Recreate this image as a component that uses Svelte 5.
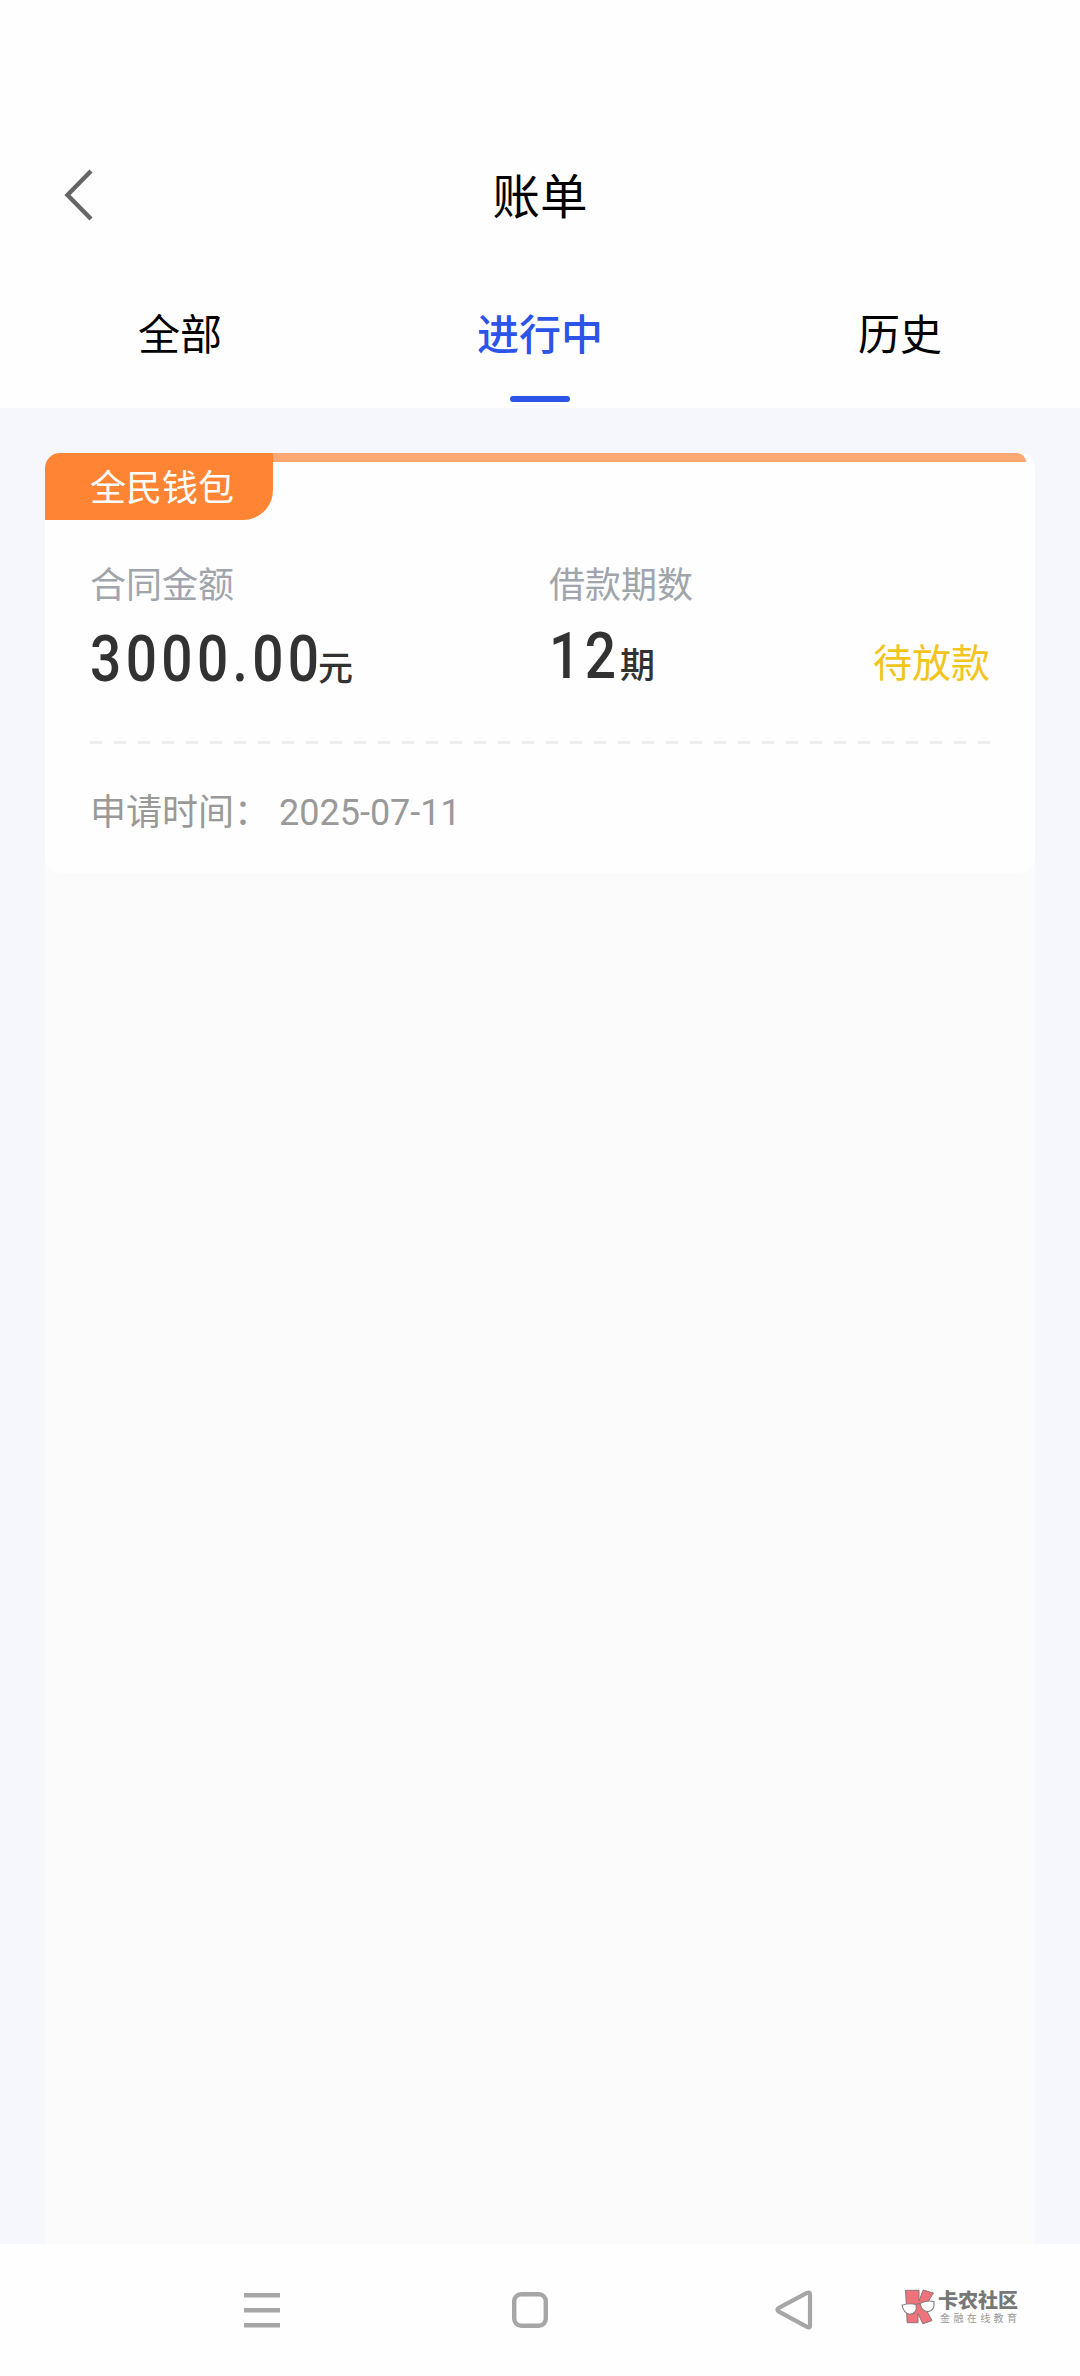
<script lang="ts">
  let active = $state('ongoing');

  const tabs = [
    { id: 'all', label: '全部' },
    { id: 'ongoing', label: '进行中' },
    { id: 'history', label: '历史' }
  ];

  const bills = [
    { product: '全民钱包', amount: '3000.00', periods: '12', status: '待放款', date: '2025-07-11' }
  ];
</script>

<div class="page">
  <header class="header">
    <button class="back" aria-label="返回">
      <svg width="30" height="54" viewBox="0 0 30 54">
        <path d="M28 3 L4.5 27 L28 51" fill="none" stroke="#666" stroke-width="4.4" />
      </svg>
    </button>
    <h1>账单</h1>
  </header>

  <nav class="tabs">
    {#each tabs as tab}
      <button class="tab" class:active={active === tab.id} onclick={() => (active = tab.id)}>
        <span>{tab.label}</span>
        <i></i>
      </button>
    {/each}
  </nav>

  <main class="content">
    <div class="list">
      {#each bills as bill}
        <section class="card">
          <div class="card-top">
            <div class="tag">{bill.product}</div>
            <div class="bar"></div>
          </div>
          <div class="info">
            <div class="amount">
              <div class="label">合同金额</div>
              <div class="value">
                <span class="digits">{bill.amount}</span><span class="unit">元</span>
              </div>
            </div>
            <div class="periods">
              <div class="label">借款期数</div>
              <div class="value">
                <span class="digits">{bill.periods}</span><span class="unit">期</span>
              </div>
            </div>
            <div class="status">{bill.status}</div>
          </div>
          <div class="divider"></div>
          <div class="apply">
            <span class="apply-label">申请时间：</span>
            <span>{bill.date}</span>
          </div>
        </section>
      {/each}
    </div>
  </main>

  <footer class="sysbar">
    <svg class="recent" width="36" height="36" viewBox="0 0 36 36">
      <path d="M0 3.3H36M0 18.3H36M0 33.3H36" stroke="#a6a6a6" stroke-width="4.6" />
    </svg>
    <svg class="home" width="36" height="36" viewBox="0 0 36 36">
      <rect x="2.2" y="2.2" width="31.6" height="31.6" rx="7" fill="none" stroke="#a6a6a6" stroke-width="4.4" />
    </svg>
    <svg class="prev" width="38" height="40" viewBox="0 0 38 40">
      <path
        d="M3.4 18.1 L32 2.9 Q35 1.6 35 4.6 V35.4 Q35 38.4 32 36.9 L3.4 21.4 Q1.5 19.8 3.4 18.1Z"
        fill="none"
        stroke="#a6a6a6"
        stroke-width="4.2"
        stroke-linejoin="round"
      />
    </svg>
    <div class="brand">
      <svg width="35" height="36" viewBox="0 0 35 36">
        <g fill="#f0727b" stroke="#8a7377" stroke-width="1">
          <path d="M4.6 1.3 H18 V12 L22.2 1 L32.5 4 L23.6 18 L31 31.6 L21.8 34.8 L17 24.5 V33.7 H6.2 Z" />
        </g>
        <g fill="#fff" stroke="#85797c" stroke-width="1.1">
          <path d="M1 16.2 Q8 13.7 15.2 15.4 Q16.4 25 8.7 25.2 Q3 25 1 16.2Z" />
          <path d="M19 14.4 Q26 10.8 33 12.6 Q34 21.8 27 22.6 Q20.6 22.6 19 14.4Z" />
          <path d="M15.2 16 Q17 13.8 19 14.8" fill="none" />
        </g>
      </svg>
      <div class="brand-text">
        <strong>卡农社区</strong>
        <small>金融在线教育</small>
      </div>
    </div>
  </footer>
</div>

<style>
  :global(body) {
    background: #fff;
  }

  .page {
    display: flex;
    flex-direction: column;
    width: 1080px;
    height: 2376px;
    overflow: hidden;
    background: #fefefe;
    font-family: Roboto, 'Noto Sans CJK SC', sans-serif;
    color: #000;
  }

  button {
    border: 0;
    padding: 0;
    background: none;
    font: inherit;
    color: inherit;
  }

  .header {
    display: grid;
    grid-template-columns: 1fr auto 1fr;
    align-items: center;
    height: 132px;
    padding: 129px 63px 0;
  }

  .back {
    display: flex;
    width: 30px;
  }

  h1 {
    margin: 0;
    padding-top: 5px;
    font-size: 47.5px;
    font-weight: 400;
    line-height: 60px;
  }

  .tabs {
    display: flex;
    height: 147px;
  }

  .tab {
    display: flex;
    flex: 1;
    flex-direction: column;
    align-items: center;
    justify-content: space-between;
    padding: 45px 0 6px;
    font-size: 42px;
    line-height: 60px;
  }

  .tab i {
    width: 60px;
    height: 6px;
    border-radius: 3px;
  }

  .tab.active {
    font-weight: 500;
    color: #2c54e8;
  }

  .active i {
    background: #2c54e8;
  }

  .content {
    flex: 1;
    padding: 45px 45px 0;
    background: #f5f7fc;
  }

  .list {
    height: 100%;
    background: #fbfbfb;
    border-radius: 15px 15px 0 0;
  }

  .card {
    height: 420px;
    border-radius: 15px;
    background: #fefefe;
  }

  .card-top {
    display: flex;
    height: 67px;
  }

  .tag {
    width: 183px;
    padding-left: 45px;
    border-radius: 15px 0 30px 0;
    background: #ff8534;
    color: #fff;
    font-size: 36px;
    line-height: 72px;
    height: 67px;
  }

  .bar {
    flex: 1;
    height: 9px;
    margin-right: 9px;
    border-radius: 0 9px 0 0;
    background: #fda873;
  }

  .info {
    display: grid;
    grid-template-columns: 459px 1fr auto;
    height: 168px;
    padding: 40px 45px 0;
    box-sizing: border-box;
  }

  .label {
    font-size: 36px;
    line-height: 52px;
    color: #a0a5ac;
  }

  .value {
    display: flex;
    align-items: baseline;
    height: 72px;
    line-height: 72px;
    color: #323232;
  }

  .digits {
    width: 228px;
    font-size: 65.5px;
    font-weight: 500;
    letter-spacing: 5.2px;
    transform: scaleX(0.84);
    transform-origin: left;
  }

  .amount .value {
    padding-top: 11px;
  }

  .periods .value {
    padding-top: 8px;
  }

  .periods .digits {
    width: 71px;
  }

  .unit {
    font-size: 35px;
    font-weight: 500;
  }

  .status {
    padding-top: 76px;
    font-size: 39px;
    line-height: 56px;
    color: #f3c41c;
  }

  .divider {
    height: 3px;
    margin: 53px 45px 0;
    background: repeating-linear-gradient(90deg, #eee 0 12px, transparent 12px 24px);
  }

  .apply {
    display: flex;
    padding: 43px 45px 0;
    font-size: 36px;
    line-height: 52px;
    color: #999;
  }

  .apply-label {
    width: 189px;
  }

  .sysbar {
    display: flex;
    align-items: center;
    height: 132px;
    padding-left: 244px;
    background: #fefefe;
  }

  .home {
    margin-left: 232px;
  }

  .prev {
    margin-left: 227px;
  }

  .brand {
    display: flex;
    gap: 2px;
    margin: -6px 0 0 88px;
  }

  .brand-text {
    display: flex;
    flex-direction: column;
    white-space: nowrap;
  }

  strong {
    font-size: 20px;
    font-weight: 900;
    line-height: 24px;
    color: #777;
  }

  small {
    padding-left: 2px;
    font-size: 10px;
    letter-spacing: 3.4px;
    line-height: 12px;
    color: #999;
  }
</style>
